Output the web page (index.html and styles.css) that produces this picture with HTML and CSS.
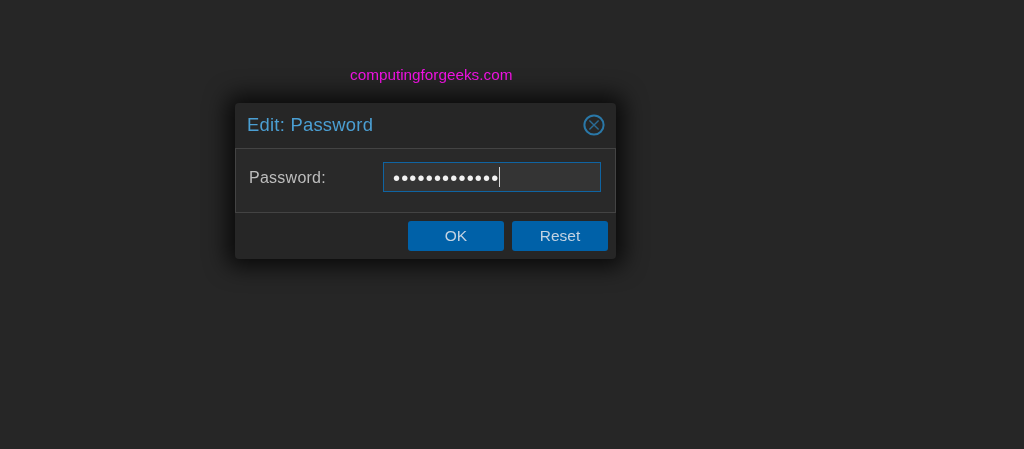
FILE: index.html
```html
<!DOCTYPE html>
<html lang="en">
<head>
<meta charset="utf-8">
<title>Edit: Password</title>
<link rel="stylesheet" href="styles.css">
</head>
<body>
<main class="page">
  <div class="watermark">computingforgeeks.com</div>
  <section class="dialog">
    <header class="dialog-head">
      <h1 class="dialog-title">Edit: Password</h1>
      <svg class="close" width="22" height="22" viewBox="0 0 22 22" aria-hidden="true">
        <circle cx="11" cy="11" r="9.6" fill="none" stroke="#2a78a8" stroke-width="2"/>
        <path d="M6.4 6.4 15.6 15.6M15.6 6.4 6.4 15.6" fill="none" stroke="#2a6a94" stroke-width="1.4"/>
      </svg>
    </header>
    <div class="dialog-body">
      <label class="field-label">Password:</label>
      <div class="field"><span class="dots">•••••••••••••</span><span class="caret"></span></div>
    </div>
    <footer class="dialog-foot">
      <button class="btn">OK</button>
      <button class="btn">Reset</button>
    </footer>
  </section>
</main>
</body>
</html>
```
FILE: styles.css
```css
* { box-sizing: border-box; }
html, body { margin: 0; height: 100%; }
body {
  background: #262626;
  font-family: "Liberation Sans", Arial, sans-serif;
  overflow: hidden;
}
.page {
  display: flex;
  flex-direction: column;
  padding: 66px 0 0 235px;
}
.watermark {
  margin-left: 115px;
  height: 37px;
  color: #f312e6;
  font-size: 15.3px;
  line-height: 18px;
  will-change: opacity;
}
.dialog {
  width: 381px;
  height: 156px;
  display: flex;
  flex-direction: column;
  background: #262626;
  border-radius: 4px;
  box-shadow: 0 0 22px 8px rgba(0, 0, 0, .75);
  will-change: opacity;
}
.dialog-head {
  height: 45px;
  flex: none;
  display: flex;
  align-items: center;
  justify-content: space-between;
  padding: 0 11px 1px 12px;
}
.dialog-title {
  margin: 0;
  color: #4b9fd3;
  font-size: 18.4px;
  font-weight: 400;
  letter-spacing: .25px;
}
.close { display: block; }
.dialog-body {
  height: 65px;
  flex: none;
  display: flex;
  align-items: center;
  padding: 0 14px 7px 13px;
  border: 1px solid #434343;
  background: #292929;
}
.field-label {
  width: 134px;
  flex: none;
  color: #bdbdbd;
  font-size: 16px;
  letter-spacing: .25px;
  padding-top: 2px;
}
.field {
  width: 218px;
  height: 30px;
  display: flex;
  align-items: center;
  padding-left: 9px;
  background: #343434;
  border: 1px solid #0f64a2;
}
.dots {
  color: #f2f2f2;
  font-size: 20px;
  letter-spacing: 1.18px;
  line-height: 30px;
  padding-top: 2px;
  margin-right: -1px;
}
.caret {
  width: 1px;
  height: 20px;
  background: #d8d8d8;
  margin-left: 1px;
}
.dialog-foot {
  flex: 1;
  display: flex;
  justify-content: flex-end;
  gap: 8px;
  padding: 8px 8px 0 0;
}
.btn {
  width: 96px;
  height: 30px;
  padding: 0;
  border: 0;
  border-radius: 3px;
  background: #0061a8;
  color: #c3d3e2;
  font: 400 15.5px "Liberation Sans", Arial, sans-serif;
}
```
